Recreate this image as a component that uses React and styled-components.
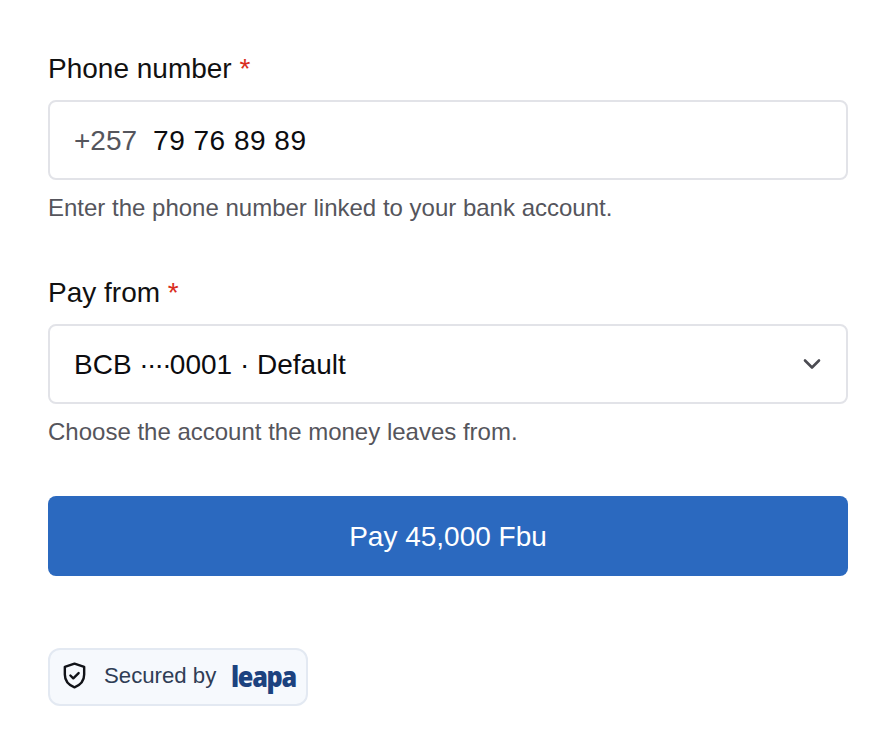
import React from 'react';
import styled, { createGlobalStyle } from 'styled-components';

const GlobalStyle = createGlobalStyle`
  html, body {
    margin: 0;
    padding: 0;
    background: #fff;
  }
  body {
    font-family: "Liberation Sans", Arial, sans-serif;
  }
`;

const ShieldIcon = () => (
  <ShieldSvg viewBox="0 0 24 24" fill="none" stroke="#111318" strokeWidth="2" strokeLinecap="round" strokeLinejoin="round">
    <path d="M12 2.200l8 2.600v6.400c0 5-3.400 8.800-8 10.600-4.600-1.800-8-5.600-8-10.600V4.800z" />
    <path d="M8.600 12l2.400 2.300 4.400-4.300" />
  </ShieldSvg>
);

const Chevron = () => (
  <svg width="24" height="24" viewBox="0 0 24 24" fill="none" stroke="#4b4b52" strokeWidth="2.600" strokeLinecap="round" strokeLinejoin="round">
    <path d="M5 8.500l7 7 7-7" />
  </svg>
);

const App = () => {
  return (
    <Page>
      <GlobalStyle />
      <Field>
        <Label>
          Phone number <Required>*</Required>
        </Label>
        <Control>
          <Prefix>+257</Prefix>
          <PhoneValue>79 76 89 89</PhoneValue>
        </Control>
        <Help>Enter the phone number linked to your bank account.</Help>
      </Field>
      <Field>
        <Label>
          Pay from <Required>*</Required>
        </Label>
        <Control>
          <span>
            BCB <Dots>····</Dots>0001 · Default
          </span>
          <ChevronWrap>
            <Chevron />
          </ChevronWrap>
        </Control>
        <Help>Choose the account the money leaves from.</Help>
      </Field>
      <PayButton>Pay 45,000 Fbu</PayButton>
      <Badge>
        <ShieldIcon />
        <BadgeText>Secured by</BadgeText>
        <Logo>leapa</Logo>
      </Badge>
    </Page>
  );
};

export default App;

const Page = styled.main`
  display: flex;
  flex-direction: column;
  align-items: stretch;
  width: 800px;
  height: 706px;
  padding: 48px 48px 0;
`;

const Field = styled.div`
  display: flex;
  flex-direction: column;
  margin-bottom: 44px;
`;

const Label = styled.div`
  padding-top: 1px;
  height: 39px;
  margin-bottom: 12px;
  font-size: 28px;
  line-height: 40px;
  color: #111;
`;

const Required = styled.span`
  color: #d92d20;
`;

const Control = styled.div`
  display: flex;
  align-items: center;
  gap: 16px;
  box-sizing: border-box;
  height: 80px;
  padding: 2px 24px 0;
  border: 2px solid #e2e3e8;
  border-radius: 8px;
  background: #fff;
  font-size: 28px;
  color: #0c0c0f;
`;

const Prefix = styled.span`
  color: #55555c;
`;

const PhoneValue = styled.span`
  letter-spacing: 0.5px;
`;

const Dots = styled.span`
  letter-spacing: -1.700px;
`;

const ChevronWrap = styled.span`
  display: flex;
  margin-left: auto;
  margin-right: -2px;
  margin-top: -2px;
`;

const Help = styled.div`
  margin-top: 8px;
  font-size: 24px;
  line-height: 40px;
  color: #55555c;
`;

const PayButton = styled.button`
  height: 80px;
  padding: 2px 0 0;
  border: none;
  border-radius: 8px;
  background: #2b69bf;
  color: #fff;
  font-family: inherit;
  font-size: 28px;
  cursor: pointer;
`;

const Badge = styled.div`
  display: flex;
  align-items: center;
  align-self: flex-start;
  box-sizing: border-box;
  width: 260px;
  height: 58px;
  margin-top: 72px;
  padding: 0 10px 3px;
  border: 2px solid #e3e9f2;
  border-radius: 12px;
  background: #f6f9fd;
`;

const ShieldSvg = styled.svg`
  flex: 0 0 29px;
  width: 29px;
  height: 29px;
`;

const BadgeText = styled.span`
  margin-left: 15px;
  font-size: 22.200px;
  white-space: nowrap;
  color: #2f3d55;
`;

const Logo = styled.span`
  margin-left: 15px;
  font-family: "Open Sans", sans-serif;
  font-size: 29px;
  font-weight: 800;
  line-height: 1;
  letter-spacing: -1.500px;
  color: #1c427f;
  transform: scaleX(0.87);
  transform-origin: left center;
`;
